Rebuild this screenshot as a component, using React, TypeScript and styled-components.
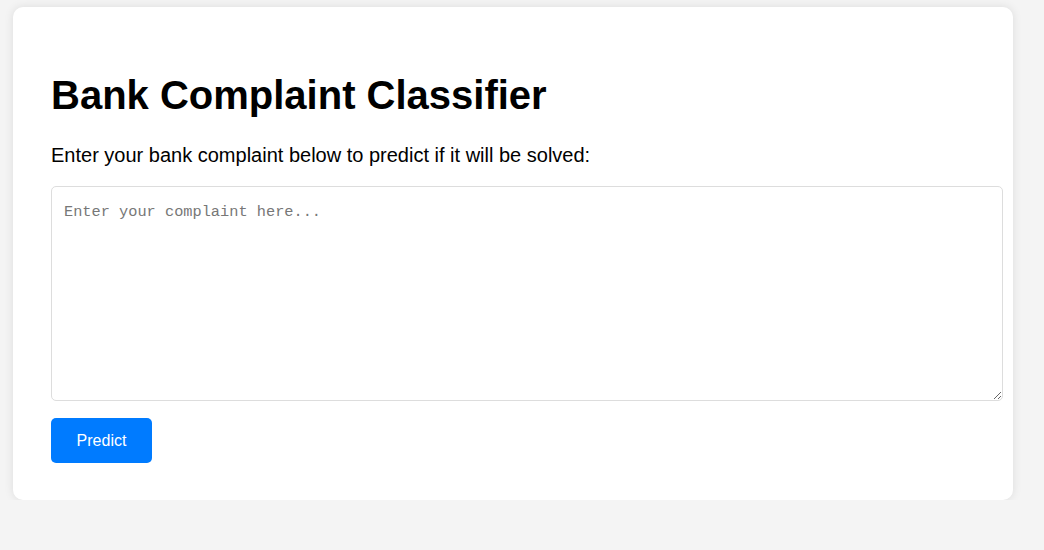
import React from "react";
import styled, { createGlobalStyle } from "styled-components";

const GlobalStyle = createGlobalStyle`
  html, body {
    margin: 0;
    padding: 0;
    background: #f4f4f4;
    font-family: "Liberation Sans", Arial, sans-serif;
  }
  #root {
    padding: 7px 0 0 13px;
  }
`;

const Card = styled.div`
  box-sizing: border-box;
  width: 1000px;
  background: #ffffff;
  border-radius: 10px;
  box-shadow: 0 0 10px rgba(0, 0, 0, 0.1);
  padding: 38px 38px 37px;
  display: flex;
  flex-direction: column;
  align-items: flex-start;
`;

const Title = styled.h1`
  margin: 27px 0 0;
  font-size: 40px;
  line-height: 46px;
  font-weight: 700;
  color: #000;
`;

const Lead = styled.p`
  margin: 26px 0 0;
  font-size: 20px;
  line-height: 23px;
  color: #000;
`;

const ComplaintInput = styled.textarea`
  box-sizing: border-box;
  display: block;
  width: 952px;
  height: 215px;
  margin-top: 19px;
  padding: 16px 12px;
  border: 1px solid #dddddd;
  border-radius: 5px;
  font-family: "Liberation Mono", "DejaVu Sans Mono", monospace;
  font-size: 15.3px;
  color: #000;
  background: #fff;
  &::placeholder {
    color: #777777;
  }
`;

const PredictButton = styled.button`
  margin-top: 17px;
  width: 101px;
  height: 45px;
  padding: 0;
  border: none;
  border-radius: 5px;
  background: #007bff;
  color: #ffffff;
  font-family: "Liberation Sans", Arial, sans-serif;
  font-size: 16px;
  cursor: pointer;
`;

export default function App() {
  return (
    <>
      <GlobalStyle />
      <Card>
        <Title>Bank Complaint Classifier</Title>
        <Lead>Enter your bank complaint below to predict if it will be solved:</Lead>
        <ComplaintInput placeholder="Enter your complaint here..." />
        <PredictButton>Predict</PredictButton>
      </Card>
    </>
  );
}
